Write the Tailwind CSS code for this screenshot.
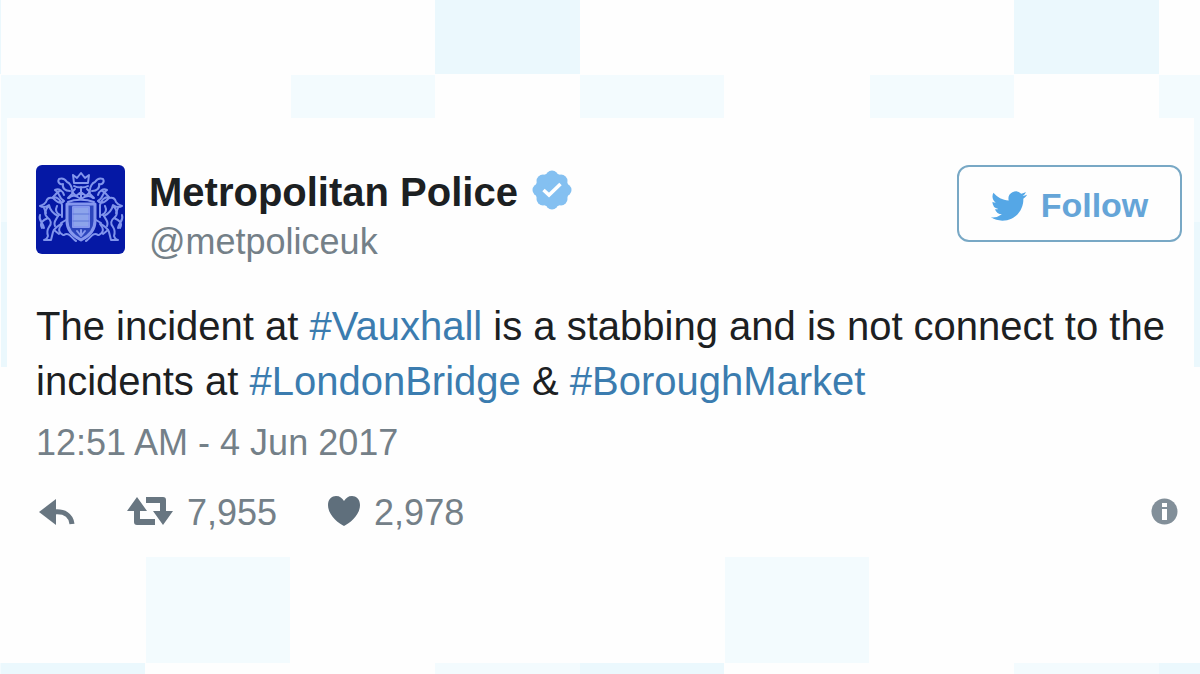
<!DOCTYPE html>
<html lang="en">
<head>
<meta charset="utf-8">
<meta name="viewport" content="width=device-width, initial-scale=1">
<title>Metropolitan Police on Twitter</title>
<script src="https://cdn.jsdelivr.net/npm/@tailwindcss/browser@4"></script>
</head>
<body class="relative min-h-screen overflow-x-hidden bg-[#fefefe] pt-[118px] pr-1.5 pl-[7px] font-['Liberation_Sans',Arial,sans-serif]">
<!-- checked backdrop -->
<svg class="absolute inset-0 -z-10 h-full w-full" aria-hidden="true">
  <defs>
    <pattern id="tiles" width="579" height="680" patternUnits="userSpaceOnUse" x="1" y="0">
      <path fill="#f3fbfe" d="M0 75h144v147H0zM290 75h144v147H290zM145 557h144v106H145zM434 663h145v17H434z"/>
      <path fill="#ebf8fd" d="M434 0h145v74H434zM0 222h144v145H0zM0 663h144v17H0z"/>
    </pattern>
  </defs>
  <rect width="100%" height="100%" fill="url(#tiles)"/>
</svg>

<article class="bg-[#fefefe] pt-[47px] pr-3 pb-5 pl-[29px] text-[#1c2022]">
  <header class="flex items-start">
    <a href="#avatar" aria-label="Metropolitan Police profile" class="mr-6 shrink-0">
      <svg class="h-[89px] w-[89px]" viewBox="0 0 89 89" fill="none" stroke-linecap="round" stroke-linejoin="round" aria-hidden="true">
        <rect width="89" height="89" rx="6" fill="#0518a5"/>
        <g stroke="#8597ee" stroke-width="2">
          <path d="M38 18l-1-8 4 3 4-5 4 5 4-3-1 8zM38 21c3 2 11 2 14 0M39 24l-3 3 4 4 5-4 5 4 4-4-3-3M45 22v11"/>
          <path d="M33 33c4-4 7-2 12 1 4-3 8-5 12-1M32 37c7-3 18-3 26 0M37 28l-5 5M53 28l5 5"/>
          <path d="M31 39h28v17c0 9-6 15-14 19-8-4-14-10-14-19z" fill="#2c45bd" stroke-width="3"/>
          <path d="M37 42h16v20H37z" fill="#8da4eb"/>
          <path d="M37 49h16M37 56h16" stroke="#5f79d8" stroke-width="1"/>
          <path d="M45 65v4M41 66l4 5 4-5"/>
        </g>
        <g id="supporter" stroke="#8094ec" stroke-width="2">
          <path d="M34 26c-5 0-8-3-7-7-3 1-6-2-4-5 3-1 6 0 8 3 3 1 5 5 5 8M28 36c-6-3-4-9-9-11 4-2 8 1 9 5M24 26c-4 1-4 4-6 5"/>
          <path d="M27 37c-4 2-7-1-10-4-4-1-6 0-7 4-2 3-4 3-6 4 3 2 6 1 9-1 1 5 5 9 9 11M17 32c5 0 8 4 9 8v12M13 41c-5 4-5 9-1 12 3 2 4 6 1 9-2 3-2 6-1 9M12 53c-5 2-9 5-6 10M4 50c-2 6 3 7 4 13M12 71c-1 3-3 4-4 4h7l2-8c1-4 5-6 8-8"/>
          <path d="M22 51c-2 4-5 6-3 10M26 59c-4 5-4 8 1 11M28 70c5-4 8 4 12 6M21 41c-2 4-1 7 3 9M18 65l5 4M8 43l2 5M30 55l-5 3"/>
        </g>
        <use href="#supporter" transform="translate(90 0) scale(-1 1)"/>
      </svg>
    </a>
    <div class="min-w-0 flex-1 pt-1">
      <div class="flex items-center">
        <a href="#profile" class="text-[40px] leading-[46px] font-bold whitespace-nowrap">Metropolitan Police</a>
        <svg class="-mt-1 ml-3.5 h-10 w-10 shrink-0" viewBox="0 0 40 40" role="img" aria-label="Verified account">
          <g fill="#84c0f1"><circle cx="20" cy="20" r="17"/><circle cx="20" cy="7" r="6.500"/><circle cx="29" cy="11" r="6.500"/><circle cx="33" cy="20" r="6.500"/><circle cx="29" cy="29" r="6.500"/><circle cx="20" cy="33" r="6.500"/><circle cx="11" cy="29" r="6.500"/><circle cx="7" cy="20" r="6.500"/><circle cx="11" cy="11" r="6.500"/></g>
          <path d="M11.500 20l5.500 5L28.500 14" fill="none" stroke="#fff" stroke-width="3.500"/>
        </svg>
      </div>
      <a href="#profile" class="block text-[36px] leading-[54px] text-[#748088]">@metpoliceuk</a>
    </div>
    <button type="button" class="flex h-[77px] w-[225px] shrink-0 items-center justify-center gap-3.5 rounded-xl border-2 border-[#78a8c5] bg-[#fefefe] pt-1 text-[34px] font-bold text-[#65a5d8]">
      <svg class="h-9 w-9" viewBox="0 0 24 24" fill="#55a7e6" aria-hidden="true"><path d="M23.954 4.569a10 10 0 0 1-2.825.775 4.958 4.958 0 0 0 2.163-2.723c-.951.555-2.005.959-3.127 1.184a4.920 4.920 0 0 0-8.384 4.482C7.691 8.094 4.066 6.130 1.640 3.161a4.822 4.822 0 0 0-.666 2.475c0 1.710.870 3.213 2.188 4.096a4.904 4.904 0 0 1-2.228-.616v.061a4.923 4.923 0 0 0 3.946 4.827 4.996 4.996 0 0 1-2.212.085 4.937 4.937 0 0 0 4.604 3.417 9.868 9.868 0 0 1-6.102 2.105c-.390 0-.779-.023-1.170-.067a13.995 13.995 0 0 0 7.557 2.209c9.054 0 13.999-7.496 13.999-13.986 0-.209 0-.420-.015-.630a9.936 9.936 0 0 0 2.460-2.548z"/></svg>
      <span>Follow</span>
    </button>
  </header>

  <p class="mt-[30px] text-[40px] leading-[55px]">The incident at <a href="#vauxhall" class="text-[#3b7caf]">#Vauxhall</a> is a stabbing and is not connect to the incidents at <a href="#londonbridge" class="text-[#3b7caf]">#LondonBridge</a> &amp; <a href="#boroughmarket" class="text-[#3b7caf]">#BoroughMarket</a></p>
  <a href="#tweet" class="mt-2 block text-[36px] leading-[52px] text-[#748088]"><time datetime="2017-06-04T00:51">12:51 AM - 4 Jun 2017</time></a>

  <footer class="mt-5 flex items-center text-[36px] leading-[48px] text-[#748088]">
    <button type="button" aria-label="Reply" class="mr-[52px] ml-[3px]">
      <svg class="h-7 w-9" viewBox="0 0 36 28" aria-hidden="true"><path d="M0 13L17 0v26z" fill="#687681"/><path d="M15 13c10-1 17 3 18 12" fill="none" stroke="#687681" stroke-width="5"/></svg>
    </button>
    <button type="button" aria-label="Retweet, 7,955" class="mr-[51px] flex items-center gap-3.5">
      <svg class="-mt-1 h-7 w-[46px]" viewBox="0 0 46 28" aria-hidden="true"><path d="M0 14L10 0l10 14zM26 14h20L36 28z" fill="#687681"/><path d="M10 11v14h18M19 3h17v14" fill="none" stroke="#687681" stroke-width="6" stroke-linejoin="round"/></svg>
      <span>7,955</span>
    </button>
    <button type="button" aria-label="Like, 2,978" class="flex items-center gap-3.5">
      <svg class="-mt-1 h-8 w-8" viewBox="0 0 32 32" fill="#5f6f7c" aria-hidden="true"><path d="M16 31C10 28 0 20 0 10 0 4 4 1 8 1c4 0 6 2 8 5 2-3 4-5 8-5s8 3 8 9c0 10-10 18-16 21z"/></svg>
      <span>2,978</span>
    </button>
    <button type="button" aria-label="Twitter Ads info and privacy" class="mr-1 ml-auto">
      <svg class="-mt-1 h-[27px] w-[27px]" viewBox="0 0 27 27" aria-hidden="true"><circle cx="13.500" cy="13.500" r="13" fill="#828f99"/><path d="M11 5h5v4h-5zM11 11h5v11h-5z" fill="#fff"/></svg>
    </button>
  </footer>
</article>
</body>
</html>
